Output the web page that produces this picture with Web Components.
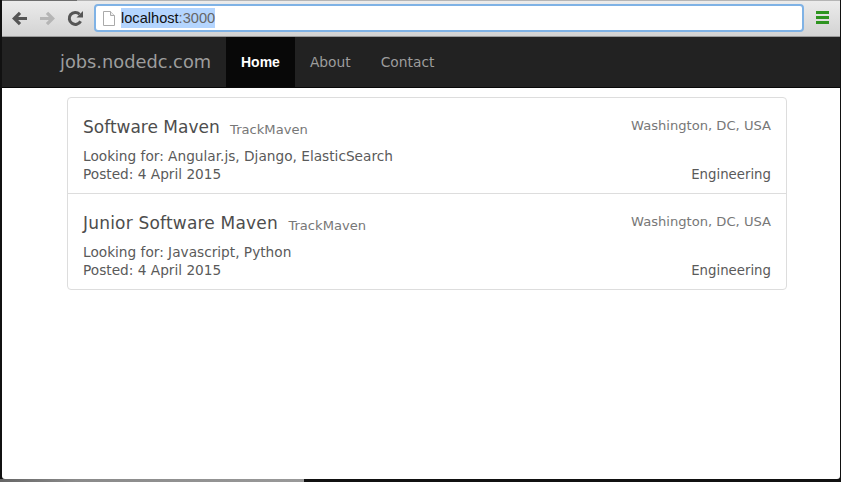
<!DOCTYPE html>
<html>
<head>
<meta charset="utf-8">
<title>jobs.nodedc.com</title>
<style>
  html, body { margin: 0; height: 100%; background: #111; overflow: hidden; }
  body { font-family: "DejaVu Sans", sans-serif; color: #555; }
</style>
</head>
<body>
<browser-window url-host="localhost" url-port=":3000">
  <site-navbar brand="jobs.nodedc.com">
    <nav-link active>Home</nav-link>
    <nav-link>About</nav-link>
    <nav-link>Contact</nav-link>
  </site-navbar>
  <job-list>
    <job-item title="Software Maven" company="TrackMaven" location="Washington, DC, USA"
      skills="Angular.js, Django, ElasticSearch" posted="4 April 2015" team="Engineering"></job-item>
    <job-item style="--title-track: .2px" title="Junior Software Maven" company="TrackMaven" location="Washington, DC, USA"
      skills="Javascript, Python" posted="4 April 2015" team="Engineering"></job-item>
  </job-list>
</browser-window>

<script>
  class BrowserWindow extends HTMLElement {
    constructor() {
      super();
      this.attachShadow({ mode: "open" });
    }

    connectedCallback() {
      const host = this.getAttribute("url-host");
      const port = this.getAttribute("url-port");
      this.shadowRoot.innerHTML = `
        <style>
          :host { display: flex; flex-direction: column; width: 841px; height: 482px; background: #111; }
          .frame { flex: 1; display: flex; flex-direction: column; margin: 0 1px 0 2px; min-height: 0; }
          .toolbar {
            height: 37px; flex: none; display: flex; align-items: center; box-sizing: border-box;
            padding: 0 0 0 8px;
            background:
              linear-gradient(#6e6e6e, #6e6e6e) 0 0 / 75px 1px no-repeat,
              linear-gradient(#b5b5b5, #b5b5b5) 0 0 / 100% 1px no-repeat,
              linear-gradient(#ececec, #d3d3d3);
            border-bottom: 1px solid #9a9a9a;
          }
          .btn { width: 19px; height: 19px; margin-right: 9px; flex: none; display: block; }
          .url {
            flex: none; width: 710px; height: 28px; box-sizing: border-box;
            display: flex; align-items: center; padding-left: 7px;
            background: #fff; border: 2px solid #7fb2e5; border-radius: 4px;
            font: 14.600px "Liberation Sans", sans-serif; color: #111;
          }
          .page-icon { width: 12px; height: 15px; margin-right: 6px; flex: none; }
          .sel { background: #b4d5fe; padding: 2px 0; }
          .port { color: #666; }
          .menu { width: 15px; height: 14px; margin-left: 11px; flex: none; }
          .page { flex: 1; background: #fff; min-height: 0; border-radius: 0 0 3px 3px; }
          .shade { height: 3px; flex: none; display: flex; }
          .shade i { width: 304px; background: linear-gradient(90deg, #666, #8a8a8a 25%, #999); }
        </style>
        <div class="frame">
          <div class="toolbar">
            <svg class="btn" viewBox="0 0 19 19"><path d="M17 9.500H6M10 3.800L4.300 9.500 10 15.200" fill="none" stroke="#555" stroke-width="3.200"/></svg>
            <svg class="btn" viewBox="0 0 19 19"><path d="M2 9.500h11M9 3.800l5.700 5.700L9 15.200" fill="none" stroke="#b5b5b5" stroke-width="3.200"/></svg>
            <svg class="btn" viewBox="0 0 19 19"><path d="M14.600 12.200A6 6 0 1 1 13.600 5.200" fill="none" stroke="#555" stroke-width="3"/><path d="M10.500 8.500H17V2z" fill="#555"/></svg>
            <div class="url">
              <svg class="page-icon" viewBox="0 0 12 15"><path d="M.5.5h7l4 4v10H.5z" fill="#fff" stroke="#aaa"/><path d="M7.500.5v4h4" fill="#eee" stroke="#aaa"/></svg>
              <span class="sel">${host}<span class="port">${port}</span></span>
            </div>
            <svg class="menu" viewBox="0 0 15 14"><path d="M1 1.500h13M1 6.500h13M1 11.500h13" stroke="#2e9420" stroke-width="3.200"/></svg>
          </div>
          <div class="page"><slot></slot></div>
        </div>
        <div class="shade"><i></i></div>
      `;
    }
  }

  class SiteNavbar extends HTMLElement {
    constructor() {
      super();
      this.attachShadow({ mode: "open" });
    }

    connectedCallback() {
      this.shadowRoot.innerHTML = `
        <style>
          :host {
            display: flex; height: 51px; box-sizing: border-box; padding-left: 58px;
            background: #222; border-bottom: 1px solid #080808;
          }
          .brand { font-size: 17.800px; color: #9d9d9d; line-height: 50px; width: 166px; white-space: nowrap; }
        </style>
        <div class="brand">${this.getAttribute("brand")}</div>
        <slot></slot>
      `;
    }
  }

  class NavLink extends HTMLElement {
    constructor() {
      super();
      this.attachShadow({ mode: "open" });
      this.shadowRoot.innerHTML = `
        <style>
          :host {
            display: block; padding: 0 15px; line-height: 50px; font-size: 13.800px; color: #9d9d9d;
          }
          :host([active]) { background: #080808; color: #fff; font: bold 14px/50px "Liberation Sans", sans-serif; }
        </style>
        <slot></slot>
      `;
    }
  }

  class JobList extends HTMLElement {
    constructor() {
      super();
      this.attachShadow({ mode: "open" });
      this.shadowRoot.innerHTML = `
        <style>
          :host {
            display: block; box-sizing: border-box; width: 720px; margin: 9px 0 0 65px;
            border: 1px solid #ddd; border-radius: 4px;
          }
        </style>
        <slot></slot>
      `;
    }
  }

  class JobItem extends HTMLElement {
    constructor() {
      super();
      this.attachShadow({ mode: "open" });
    }

    connectedCallback() {
      const a = (name) => this.getAttribute(name);
      this.shadowRoot.innerHTML = `
        <style>
          :host {
            display: grid; grid-template-columns: 1fr auto; align-content: start; align-items: baseline;
            box-sizing: border-box; height: 96px;
            padding: 16px 15px 0; font-size: 13.700px; line-height: 18px; color: #5a5a5a;
            border-bottom: 1px solid #ddd;
          }
          :host(:last-child) { border-bottom: 0; height: 95px; }
          .head { height: 33px; white-space: nowrap; }
          h4 { display: inline; margin: 0 6px 0 0; font-size: 17px; font-weight: normal; line-height: 26px; color: #4d4d4d; letter-spacing: var(--title-track, 0); }
          small { font-size: 13.100px; color: #777; vertical-align: -1px; }
          .loc { font-size: 13.100px; color: #777; text-align: right; line-height: 20px; align-self: start; padding-top: 2px; }
          .team { text-align: right; font-size: 13.300px; }
        </style>
        <div class="head"><h4>${a("title")}</h4> <small>${a("company")}</small></div>
        <div class="loc">${a("location")}</div>
        <div>Looking for: ${a("skills")}</div>
        <div></div>
        <div>Posted: ${a("posted")}</div>
        <div class="team">${a("team")}</div>
      `;
    }
  }

  customElements.define("browser-window", BrowserWindow);
  customElements.define("site-navbar", SiteNavbar);
  customElements.define("nav-link", NavLink);
  customElements.define("job-list", JobList);
  customElements.define("job-item", JobItem);
</script>
</body>
</html>
